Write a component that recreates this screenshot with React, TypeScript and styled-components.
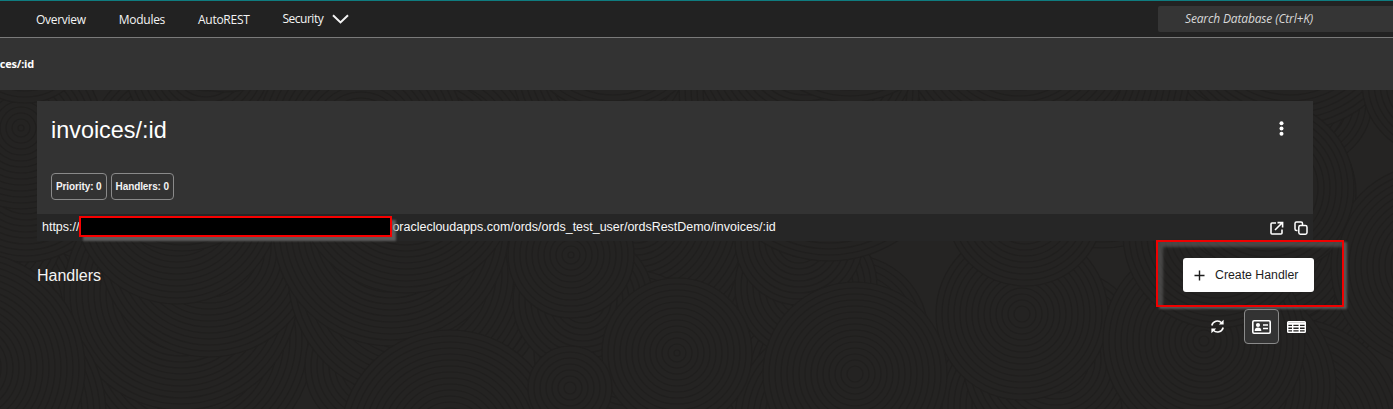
import React from "react";
import styled, { createGlobalStyle } from "styled-components";

const Global = createGlobalStyle`
  html, body { margin: 0; padding: 0; background: #252423; }
  body { font-family: "Liberation Sans", Arial, sans-serif; color: #fff; overflow: hidden; }
`;

const Page = styled.div`
  position: relative;
  width: 1393px;
  height: 409px;
  overflow: hidden;
  background-color: #252423;
`;

const Texture = styled.svg`
  position: absolute;
  inset: 0;
  width: 1393px;
  height: 409px;
`;

const Layer = styled.div`
  position: relative;
`;

const TopBar = styled.header`
  box-sizing: border-box;
  height: 38px;
  background: #222222;
  border-top: 1px solid #0f7c80;
  border-bottom: 1px solid #7a7a7a;
  display: flex;
  align-items: center;
  justify-content: space-between;
  padding: 0 0 1px 36px;
  font-family: "Open Sans", "Noto Sans", sans-serif;
`;

const Nav = styled.nav`
  display: flex;
  align-items: center;
  gap: 33px;
  padding-top: 1px;
`;

const NavItem = styled.a<{ $menu?: boolean }>`
  display: flex;
  align-items: center;
  gap: 9px;
  font-size: 12px;
  letter-spacing: ${(p) => (p.$menu ? "-0.5px" : "-0.28px")};
  margin-top: ${(p) => (p.$menu ? "-1px" : "0")};
  color: #f4f4f4;
`;

const SearchBox = styled.div`
  box-sizing: border-box;
  width: 235px;
  height: 26px;
  background: #353535;
  border-radius: 2px 0 0 2px;
  padding-left: 27px;
  display: flex;
  align-items: center;
  font-size: 12px;
  font-style: italic;
  letter-spacing: -0.15px;
  color: #d8d8d8;
`;

const SubBar = styled.div`
  height: 52px;
  background: #333333;
  display: flex;
  align-items: center;
  overflow: hidden;
  font-size: 11px;
  font-weight: 700;
  color: #fff;
`;

const Crumb = styled.span`
  margin: -2px 0 0 -34px;
  font-family: "Open Sans", "Noto Sans", sans-serif;
  letter-spacing: -0.2px;
  width: 68px;
  text-align: right;
`;

const Content = styled.main`
  padding: 11px 80px 0 37px;
`;

const Card = styled.section`
  box-sizing: border-box;
  height: 113px;
  background: #333333;
  padding: 15px 14px 0;
  display: flex;
  flex-direction: column;
`;

const CardHead = styled.div`
  display: flex;
  justify-content: space-between;
  align-items: flex-start;
`;

const Title = styled.h1`
  margin: 0;
  font-size: 23.4px;
  line-height: 29px;
  font-weight: 400;
  color: #fff;
`;

const MoreButton = styled.span`
  display: flex;
  margin: 5px 15px 0 0;
  color: #fff;
`;

const Badges = styled.div`
  display: flex;
  gap: 4px;
  margin-top: 28px;
`;

const Badge = styled.span`
  box-sizing: border-box;
  height: 27px;
  padding: 0 4px;
  display: flex;
  align-items: center;
  border: 1px solid #8a8a8a;
  border-radius: 4px;
  font-size: 10px;
  letter-spacing: -0.1px;
  font-weight: 700;
  color: #f4f4f4;
`;

const UrlRow = styled.div`
  box-sizing: border-box;
  height: 27px;
  background: #262626;
  padding: 0 5px;
  display: flex;
  align-items: center;
  justify-content: space-between;
  font-size: 12.47px;
  color: #f8f8f8;
`;

const UrlText = styled.span`
  white-space: nowrap;
  margin-top: -2px;
`;

const UrlHidden = styled.span`
  display: inline-block;
  width: 313px;
`;

const UrlIcons = styled.div`
  display: flex;
  align-items: center;
  gap: 10px;
  color: #fff;
`;

const HandlersRow = styled.div`
  display: flex;
  align-items: center;
  justify-content: space-between;
  height: 34px;
  margin-top: 17px;
  margin-right: -1px;
`;

const HandlersTitle = styled.h2`
  margin: 1px 0 0;
  font-size: 16px;
  font-weight: 400;
  color: #f4f4f4;
`;

const CreateButton = styled.button`
  box-sizing: border-box;
  width: 131px;
  height: 34px;
  padding: 0 0 0 11px;
  border: none;
  border-radius: 3px;
  background: #fff;
  color: #1d1d1d;
  display: flex;
  align-items: center;
  gap: 10px;
  font-family: "Liberation Sans", Arial, sans-serif;
  font-size: 12.3px;
`;

const Toolbar = styled.div`
  display: flex;
  align-items: center;
  justify-content: flex-end;
  margin: 17px -1px 0 0;
  height: 35px;
`;

const ToolButton = styled.span<{ $active?: boolean }>`
  box-sizing: border-box;
  width: 35px;
  height: 35px;
  display: flex;
  align-items: center;
  justify-content: center;
  border-radius: 4px;
  color: #fff;
  border: 1px solid ${(p) => (p.$active ? "#8a8a8a" : "transparent")};
  background: ${(p) => (p.$active ? "#333" : "transparent")};
`;

const RefreshButton = styled(ToolButton)`
  margin-right: 9px;
`;

const Redaction = styled.div`
  position: absolute;
  left: 79px;
  top: 216px;
  width: 313px;
  height: 21px;
  box-sizing: border-box;
  background: #000;
  border: 2px solid #f80000;
  box-shadow: 4px 4px 2px rgba(120,120,120,0.65);
`;

const Highlight = styled.div`
  position: absolute;
  left: 1156px;
  top: 240px;
  width: 188px;
  height: 67px;
  box-sizing: border-box;
  border: 2px solid #f00000;
  box-shadow: 3px 2px 2px rgba(120,120,120,0.6), inset 5px 5px 3px rgba(120,120,120,0.45);
`;

const swirls: [number, number, number][] = [];
for (let i = 0; i < 90; i++) {
  const x = (i * 211 + ((i * i * 37) % 97)) % 1480 - 40;
  const y = ((i * 127 + ((i * 53) % 61)) % 470) - 20;
  swirls.push([x, y, 60 + ((i * 29) % 70)]);
}
swirls.push([450, 440, 110], [677, 353, 75], [570, 388, 42]);

function Swirl({ x, y, r }: { x: number; y: number; r: number }) {
  const rings = [];
  for (let q = r; q > 2; q -= 6) rings.push(q);
  return (
    <g>
      <circle cx={x} cy={y} r={r} fill="#242322" />
      {rings.map((q) => (
        <circle key={q} cx={x} cy={y} r={q} fill="none" stroke="#201f1e" strokeWidth="1.2" />
      ))}
    </g>
  );
}

export default function App() {
  return (
    <Page>
      <Global />
      <Texture viewBox="0 0 1393 409" aria-hidden="true">
        {swirls.map(([x, y, r], i) => (
          <Swirl key={i} x={x} y={y} r={r} />
        ))}
      </Texture>
      <Layer>
        <TopBar>
          <Nav>
            <NavItem>Overview</NavItem>
            <NavItem>Modules</NavItem>
            <NavItem>AutoREST</NavItem>
            <NavItem $menu>
              Security
              <svg width="17" height="10" viewBox="0 0 17 10" fill="none" stroke="currentColor" strokeWidth="2">
                <path d="M1 1.2 L8.5 8.4 L16 1.2" />
              </svg>
            </NavItem>
          </Nav>
          <SearchBox>Search Database (Ctrl+K)</SearchBox>
        </TopBar>
        <SubBar>
          <Crumb>invoices/:id</Crumb>
        </SubBar>
        <Content>
          <Card>
            <CardHead>
              <Title>invoices/:id</Title>
              <MoreButton>
                <svg width="5" height="15" viewBox="0 0 5 15" fill="currentColor">
                  <circle cx="2.5" cy="2.2" r="2" />
                  <circle cx="2.5" cy="7.5" r="2" />
                  <circle cx="2.5" cy="12.8" r="2" />
                </svg>
              </MoreButton>
            </CardHead>
            <Badges>
              <Badge>Priority: 0</Badge>
              <Badge>Handlers: 0</Badge>
            </Badges>
          </Card>
          <UrlRow>
            <UrlText>
              https://<UrlHidden />oraclecloudapps.com/ords/ords_test_user/ordsRestDemo/invoices/:id
            </UrlText>
            <UrlIcons>
              <svg width="14" height="14" viewBox="0 0 14 14" fill="none" stroke="currentColor" strokeWidth="1.6">
                <path d="M6 2 H2 Q1 2 1 3 V12 Q1 13 2 13 H11 Q12 13 12 12 V8.5" />
                <path d="M5 9 L12 2 M7.5 1.6 H12.6 V6.5" />
              </svg>
              <svg width="14" height="14" viewBox="0 0 14 14" fill="none" stroke="currentColor" strokeWidth="1.5">
                <path d="M3.5 9.5 H2.5 Q1 9.5 1 8 V2.5 Q1 1 2.5 1 H7 Q8.5 1 8.5 2.5 V4" />
                <rect x="4.8" y="4.6" width="8.2" height="8.6" rx="1.6" />
              </svg>
            </UrlIcons>
          </UrlRow>
          <HandlersRow>
            <HandlersTitle>Handlers</HandlersTitle>
            <CreateButton>
              <svg width="11" height="11" viewBox="0 0 11 11" stroke="currentColor" strokeWidth="1.4">
                <path d="M5.5 0.5 V10.5 M0.5 5.5 H10.5" />
              </svg>
              Create Handler
            </CreateButton>
          </HandlersRow>
          <Toolbar>
            <RefreshButton>
              <svg width="15" height="15" viewBox="0 0 15 15" fill="none" stroke="currentColor" strokeWidth="1.6">
                <path d="M1.8 6.5 A5.8 5.8 0 0 1 11.6 3.8" />
                <path d="M13.2 8.5 A5.8 5.8 0 0 1 3.4 11.2" />
                <path d="M13.6 0.8 V5.6 H8.8 Z" fill="currentColor" stroke="none" />
                <path d="M1.4 14.2 V9.4 H6.2 Z" fill="currentColor" stroke="none" />
              </svg>
            </RefreshButton>
            <ToolButton $active>
              <svg width="19" height="14" viewBox="0 0 19 14" fill="none" stroke="currentColor" strokeWidth="1.6">
                <rect x="0.8" y="0.8" width="17.4" height="12.4" rx="1.2" />
                <circle cx="6" cy="5" r="2.1" fill="currentColor" stroke="none" />
                <path d="M2.6 11 Q2.8 7.6 6 7.6 Q9.2 7.6 9.4 11 Z" fill="currentColor" stroke="none" />
                <path d="M11 5 H16 M11 8.5 H16" />
              </svg>
            </ToolButton>
            <ToolButton>
              <svg width="19" height="12" viewBox="0 0 19 12" fill="none" stroke="currentColor" strokeWidth="1.4">
                <rect x="0.7" y="0.7" width="17.6" height="10.6" rx="0.8" />
                <path d="M0.7 2.6 H18.3" strokeWidth="2.4" />
                <path d="M0.7 5.8 H18.3 M0.7 8.6 H18.3 M5.7 2 V11 M12.3 2 V11" />
              </svg>
            </ToolButton>
          </Toolbar>
        </Content>
      </Layer>
      <Redaction />
      <Highlight />
    </Page>
  );
}
